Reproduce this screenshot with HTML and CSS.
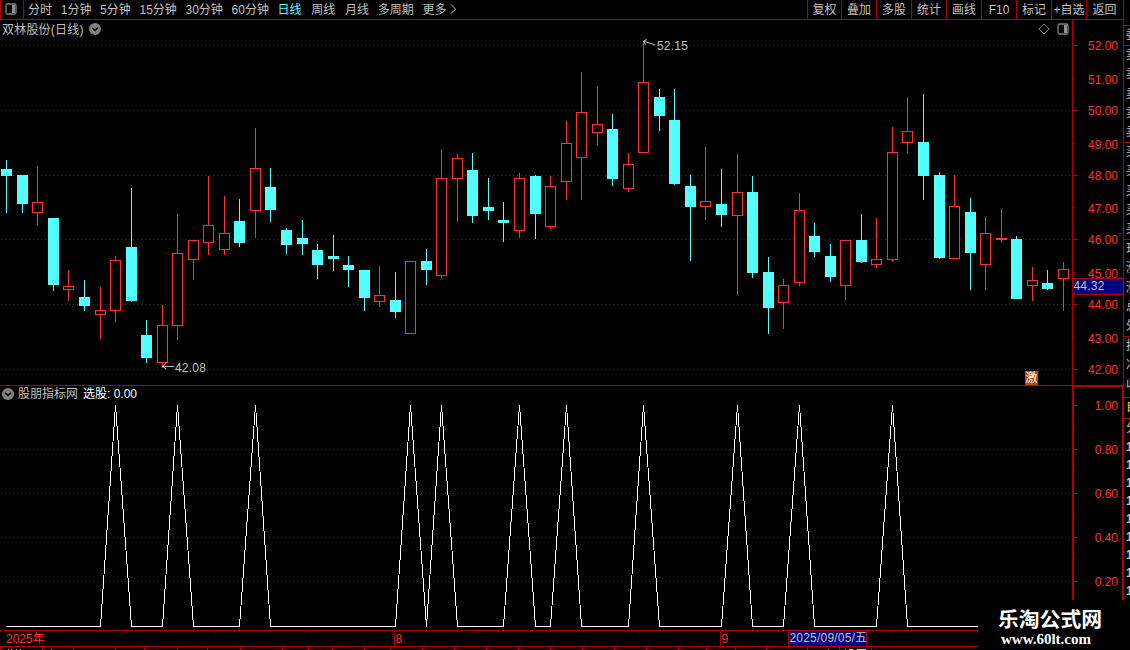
FILE: index.html
```
<!DOCTYPE html>
<html lang="zh-CN">
<head>
    <meta charset="UTF-8">
    <meta name="viewport" content="width=device-width, initial-scale=1.0">
    <title>双林股份(日线)</title>
    <link rel="stylesheet" href="styles.css">
</head>
<body>
    <div class="app">
        <div class="toolbar">
            <div class="layout-btn">
                <svg width="12" height="12" viewBox="0 0 12 12"><rect x="1" y="1" width="10" height="10" rx="1.5" class="panel-frame"/><rect x="7" y="2" width="3" height="8" class="panel-fill"/></svg>
            </div>
            <div class="periods">
                <span>分时</span>
                <span>1分钟</span>
                <span>5分钟</span>
                <span>15分钟</span>
                <span>30分钟</span>
                <span>60分钟</span>
                <span class="active">日线</span>
                <span class="wide">周线</span>
                <span class="wide">月线</span>
                <span>多周期</span>
                <span class="more">更多<svg width="6" height="10" viewBox="0 0 6 10"><path d="M1 0.5L5.5 5L1 9.5"/></svg></span>
            </div>
            <div class="tools">
                <span class="first">复权</span>
                <span>叠加</span>
                <span>多股</span>
                <span>统计</span>
                <span>画线</span>
                <span>F10</span>
                <span>标记</span>
                <span>+自选</span>
                <span class="last">返回</span>
            </div>
        </div>

        <div class="main">
            <div class="charts">
                <div class="price-panel">
                    <svg id="priceChart" width="1072" height="365" viewBox="0 20 1072 365"></svg>
                    <div class="panel-title">
                        <span>双林股份(日线)</span>
                        <svg class="chevron" width="12" height="12" viewBox="0 0 12 12"><circle cx="6" cy="6" r="6"/><path d="M3 4.7L6 7.5L9 4.7"/></svg>
                    </div>
                    <div class="panel-icons">
                        <svg width="12" height="12" viewBox="0 0 12 12"><path d="M6 1L11 6L6 11L1 6Z" class="diamond"/></svg>
                        <svg width="12" height="12" viewBox="0 0 12 12"><rect x="1" y="1" width="10" height="10" rx="1.5" class="panel-frame"/><rect x="7" y="2" width="3" height="8" class="panel-fill"/></svg>
                    </div>
                    <div class="badge">激</div>
                </div>
                <div class="indicator-panel">
                    <svg id="signalChart" width="1072" height="244" viewBox="0 386 1072 244"></svg>
                    <div class="panel-title">
                        <svg class="chevron" width="12" height="12" viewBox="0 0 12 12"><circle cx="6" cy="6" r="6"/><path d="M3 4.7L6 7.5L9 4.7"/></svg>
                        <span>股朋指标网</span>
                        <span class="value">选股: 0.00</span>
                    </div>
                </div>
                <svg id="timeAxis" width="1072" height="20" viewBox="0 630 1072 20"></svg>
            </div>
            <svg id="valueAxis" width="52" height="630" viewBox="1072 20 52 630"></svg>
            <div class="quote">
                <div class="rows head"><span>委</span></div>
                <div class="rows"><span>卖</span><span>卖</span><span>卖</span><span>卖</span><span>卖</span></div>
                <div class="rows"><span>买</span><span>买</span><span>买</span><span>买</span><span>买</span></div>
                <div class="rows"><span>现</span><span>涨</span><span>涨</span><span>总</span><span>外</span></div>
                <div class="rows"><span>换</span><span>净</span><span>收</span></div>
                <div class="rows tab"><span>自</span></div>
                <div class="rows tick-head"><span>分</span></div>
                <div class="ticks"><span>1</span><span>1</span><span>1</span><span>1</span><span>1</span><span>1</span><span>1</span><span>1</span><span>1</span></div>
            </div>
        </div>

        <div class="watermark">
            <div class="site-name">乐淘公式网</div>
            <div class="site-url">www.60lt.com</div>
        </div>
    </div>
    <script src="chart.js"></script>
</body>
</html>
```
FILE: styles.css
```
* {
    margin: 0;
    padding: 0;
    box-sizing: border-box;
}

body {
    width: 1130px;
    height: 650px;
    overflow: hidden;
    background: #000;
    color: #c0c0c0;
    font-family: 'Liberation Sans', 'Noto Sans CJK SC', sans-serif;
    font-size: 12px;
    line-height: 18px;
}

svg {
    display: block;
}

.app {
    position: relative;
    width: 1130px;
    height: 650px;
    overflow: hidden;
}

/* Toolbar */
.toolbar {
    display: flex;
    height: 20px;
    width: 1124px;
    border-bottom: 1px solid #b00000;
    border-right: 1px solid #b00000;
    line-height: 20px;
    white-space: nowrap;
}

.layout-btn {
    width: 24px;
    padding: 3px 0 0 4px;
    border-left: 1px solid #b00000;
    border-right: 1px solid #b00000;
}

.panel-frame {
    fill: none;
    stroke: #808080;
    stroke-width: 1.3;
}

.panel-fill {
    fill: #909090;
}

.periods {
    display: flex;
    flex: 1;
    gap: 8.7px;
    padding-left: 4px;
}

.periods .active {
    color: #54ffff;
}

.periods .wide {
    margin-left: 1px;
}

.more {
    display: flex;
    height: 19px;
    align-items: center;
    gap: 4px;
}

.more path {
    fill: none;
    stroke: #c0c0c0;
}

.more svg {
    margin-top: -1px;
}

.tools {
    display: flex;
}

.tools span {
    width: 35px;
    border-left: 1px solid #b00000;
    text-align: center;
}

.tools .first {
    width: 34px;
}

.tools .last {
    width: 37px;
    padding-right: 1px;
}

/* Panels */
.main {
    display: flex;
    height: 630px;
}

.charts {
    width: 1072px;
}

.price-panel {
    position: relative;
    height: 366px;
    border-bottom: 1px solid #b00000;
}

.indicator-panel {
    position: relative;
    height: 244px;
}

.panel-title {
    position: absolute;
    left: 2px;
    top: 0;
    display: flex;
    align-items: center;
    gap: 4px;
    height: 18px;
}

.price-panel .panel-title {
    gap: 5px;
    letter-spacing: 0.2px;
}

.price-panel .panel-title span {
    padding-top: 1px;
}

.panel-title .value {
    color: #fff;
    margin-left: 1px;
}

.indicator-panel .panel-title {
    top: -1px;
}

.chevron circle {
    fill: #808080;
}

.chevron path {
    fill: none;
    stroke: #000;
    stroke-width: 1.4;
}

.panel-icons {
    position: absolute;
    left: 1038px;
    top: 3px;
    display: flex;
    gap: 7px;
}

.diamond {
    fill: none;
    stroke: #808080;
}

.badge {
    position: absolute;
    left: 1025px;
    top: 351px;
    width: 13px;
    height: 14px;
    line-height: 14px;
    background: #c04808;
    color: #fff;
    text-align: center;
}

/* Chart drawing */
.crisp {
    shape-rendering: crispEdges;
}

.grid {
    stroke: #a00000;
    stroke-dasharray: 1 3;
}

.axis {
    fill: #b00000;
}

.up {
    fill: #ff3232;
}

.up-body {
    fill: #000;
    stroke: #ff3232;
}

.down {
    fill: #54ffff;
}

.signal {
    fill: none;
    stroke: #fff;
}

.label {
    fill: #ff3232;
    font-size: 12px;
}

.label-light {
    fill: #c0c0c0;
    font-size: 12px;
    letter-spacing: 0.2px;
}

.arrow {
    fill: none;
    stroke: #c0c0c0;
}

.cursor {
    fill: #000080;
}

.cyan {
    fill: #54ffff;
}

.grey {
    fill: #c0c0c0;
}

/* Quote strip, cut off by the window edge */
.quote {
    width: 6px;
    height: 580px;
    padding-top: 5px;
    overflow: hidden;
}

.quote .rows {
    border-top: 1px solid #b00000;
    height: 97px;
    overflow: hidden;
    width: 6px;
}

.quote span {
    display: block;
    width: 14px;
    height: 19.3px;
    line-height: 19px;
    padding-left: 2px;
}

.quote .head {
    height: 20px;
}

.quote .rows:nth-child(5) {
    height: 61px;
}

.quote .tab {
    height: 21px;
    color: #e0e000;
}

.quote .tick-head {
    height: 19px;
}

.ticks span {
    height: 18px;
    line-height: 20px;
    font-weight: bold;
}

/* Watermark */
.watermark {
    position: absolute;
    left: 978px;
    top: 600px;
    width: 152px;
    height: 50px;
    padding-top: 5px;
    background: #000;
    color: #fff;
    font-weight: bold;
}

.site-name {
    padding-left: 20px;
    font-family: 'Noto Sans CJK SC', sans-serif;
    font-size: 20.8px;
    line-height: 26px;
}

.site-url {
    padding-left: 23px;
    font-family: 'Liberation Serif', serif;
    font-size: 15px;
    line-height: 16px;
}
```
FILE: chart.js
```
// x, high, body top, body bottom, low, rising
const candles = [
    [6, 160, 169, 176, 213, 0], [22, 175, 175, 204, 213, 0], [37, 166, 202, 213, 225, 1],
    [53, 218, 218, 285, 291, 0], [68, 270, 286, 290, 301, 1], [84, 280, 297, 306, 311, 0],
    [100, 287, 310, 315, 339, 1], [115, 256, 260, 311, 322, 1], [131, 188, 247, 301, 302, 0],
    [146, 320, 335, 358, 363, 0], [162, 305, 325, 363, 368, 1], [177, 214, 253, 326, 340, 1],
    [193, 240, 240, 260, 280, 1], [208, 176, 225, 243, 255, 1], [224, 196, 233, 250, 255, 1],
    [239, 199, 221, 243, 247, 0], [255, 128, 168, 211, 238, 1], [270, 168, 187, 210, 222, 0],
    [286, 228, 230, 245, 254, 0], [302, 220, 238, 244, 255, 0], [317, 244, 250, 265, 279, 0],
    [333, 235, 256, 259, 271, 0], [348, 256, 265, 270, 287, 0], [364, 270, 270, 298, 311, 0],
    [379, 266, 295, 302, 307, 1], [395, 272, 300, 312, 318, 0], [410, 261, 261, 334, 334, 1],
    [426, 249, 261, 270, 285, 0], [441, 149, 178, 276, 278, 1], [457, 154, 158, 179, 222, 1],
    [472, 153, 170, 216, 223, 0], [488, 178, 207, 211, 220, 0], [503, 202, 220, 223, 242, 0],
    [519, 173, 178, 231, 238, 1], [535, 175, 176, 214, 239, 0], [550, 176, 186, 227, 229, 1],
    [566, 121, 143, 182, 200, 1], [581, 72, 112, 158, 200, 1], [597, 87, 124, 133, 145, 1],
    [612, 114, 129, 179, 186, 0], [628, 153, 164, 189, 192, 1], [643, 41, 82, 153, 153, 1],
    [659, 89, 97, 116, 131, 0], [674, 89, 120, 184, 185, 0], [690, 175, 186, 207, 261, 0],
    [705, 147, 201, 207, 220, 1], [721, 169, 204, 215, 227, 0], [737, 154, 192, 216, 295, 1],
    [752, 176, 192, 273, 278, 0], [768, 257, 272, 308, 334, 0], [783, 279, 285, 303, 329, 1],
    [799, 193, 210, 283, 286, 1], [814, 223, 236, 252, 257, 0], [830, 244, 256, 277, 282, 0],
    [845, 240, 240, 286, 300, 1], [861, 214, 240, 262, 263, 0], [876, 218, 259, 265, 268, 1],
    [892, 127, 152, 260, 262, 1], [907, 97, 131, 143, 153, 1], [923, 94, 142, 176, 200, 0],
    [939, 172, 175, 258, 259, 0], [954, 175, 206, 259, 259, 1], [970, 198, 212, 253, 290, 0],
    [985, 217, 233, 265, 290, 1], [1001, 209, 238, 240, 243, 1], [1016, 236, 239, 299, 299, 0],
    [1032, 267, 280, 286, 301, 1], [1047, 270, 283, 289, 290, 0], [1063, 262, 269, 279, 311, 1]
];
const signals = [115, 177, 255, 410, 441, 519, 566, 643, 737, 799, 892];

function rect(x, y, w, h, cls) {
    return `<rect x="${x}" y="${y}" width="${w}" height="${h}" class="crisp ${cls}"/>`;
}

function grid(y) {
    return `<line x1="1" y1="${y + 0.5}" x2="1072" y2="${y + 0.5}" class="crisp grid"/>`;
}

function text(x, y, str, cls, anchor) {
    return `<text x="${x}" y="${y}" class="${cls}" text-anchor="${anchor || 'start'}">${str}</text>`;
}

// Price chart
let out = [45, 110, 175, 239, 304, 369].map(grid).join('');
candles.forEach(([x, high, top, bottom, low, rising]) => {
    out += rect(x, high, 1, low - high, rising ? 'up' : 'down');
    if (rising) {
        out += `<rect x="${x - 4.5}" y="${top + 0.5}" width="10" height="${bottom - top - 1}" class="crisp up-body"/>`;
    } else {
        out += rect(x - 5, top, 11, bottom - top, 'down');
    }
});
out += '<path d="M655 45L643.5 41M647 39.5L643.5 41L645.5 44.5" class="arrow"/>';
out += text(657, 50, '52.15', 'label-light');
out += '<path d="M174 366.5H162.5M166 363.5L162.5 366.5L166 369" class="arrow"/>';
out += text(175, 372, '42.08', 'label-light');
document.getElementById('priceChart').innerHTML = out;

// Signal chart
out = [449, 493, 537, 581].map(grid).join('');
const points = candles.map(([x]) => `${x + 0.5},${signals.includes(x) ? 405 : 626.5}`).join(' ');
out += rect(6, 626, 2, 1, 'signal-start grey');
out += `<polyline points="${points}" class="crisp signal"/>`;
document.getElementById('signalChart').innerHTML = out;

// Value axis
out = rect(1072, 20, 1, 366, 'axis') + rect(1123, 20, 1, 366, 'axis');
const prices = [45, 78, 110, 143, 175, 207, 239, 272, 304, 337, 369];
prices.forEach((y, i) => {
    out += rect(1073, y, i % 2 ? 2 : 5, 1, 'axis');
    out += text(1118, y + (i % 2 ? 6 : 5), (52 - i).toFixed(2), 'label', 'end');
});
out += rect(1072, 278, 51, 17, 'axis') + rect(1073, 279, 50, 15, 'cursor');
out += text(1073.5, 290, '44.32', 'label-light');
out += rect(1072, 385, 52, 2, 'axis') + rect(1072, 385, 2, 215, 'axis') + rect(1122, 385, 2, 215, 'axis');
[405, 449, 493, 537, 581].forEach((y, i) => {
    out += rect(1074, y, 4, 1, 'axis');
    if (i < 4) out += rect(1074, y + 22, 1, 1, 'axis');
    out += text(1118, y + 5, (1 - i * 0.2).toFixed(2), 'label', 'end');
});
document.getElementById('valueAxis').innerHTML = out;

// Time axis and the top edge of the tab row below it
out = rect(0, 630, 978, 1, 'axis') + rect(0, 646, 978, 1, 'axis');
[126, 215, 305, 476, 557, 639, 891, 977].forEach(x => out += rect(x, 631, 1, 2, 'axis'));
[394, 720].forEach(x => out += rect(x, 630, 1, 16, 'axis'));
[0, 42, 73, 115, 144, 177, 207, 240, 282, 308, 332, 364, 390, 422, 454, 486, 518, 550, 582, 614, 646, 678, 706, 735, 766, 807, 839, 871]
    .forEach(x => out += rect(x, 647, 1, 3, 'axis'));
out += rect(788, 630, 79, 16, 'axis') + rect(789, 631, 77, 15, 'cursor');
out += text(6, 643, '2025年', 'label') + text(395.5, 643, '8', 'label') + text(721.5, 643, '9', 'label');
out += text(789.5, 642, '2025/09/05/五', 'label-light');
[8, 11, 16, 20, 51, 828, 845].forEach(x => out += rect(x, 649, 1, 1, 'grey'));
out += rect(849, 649, 4, 1, 'cyan') + rect(857, 649, 9, 1, 'cyan');
document.getElementById('timeAxis').innerHTML = out;
```
